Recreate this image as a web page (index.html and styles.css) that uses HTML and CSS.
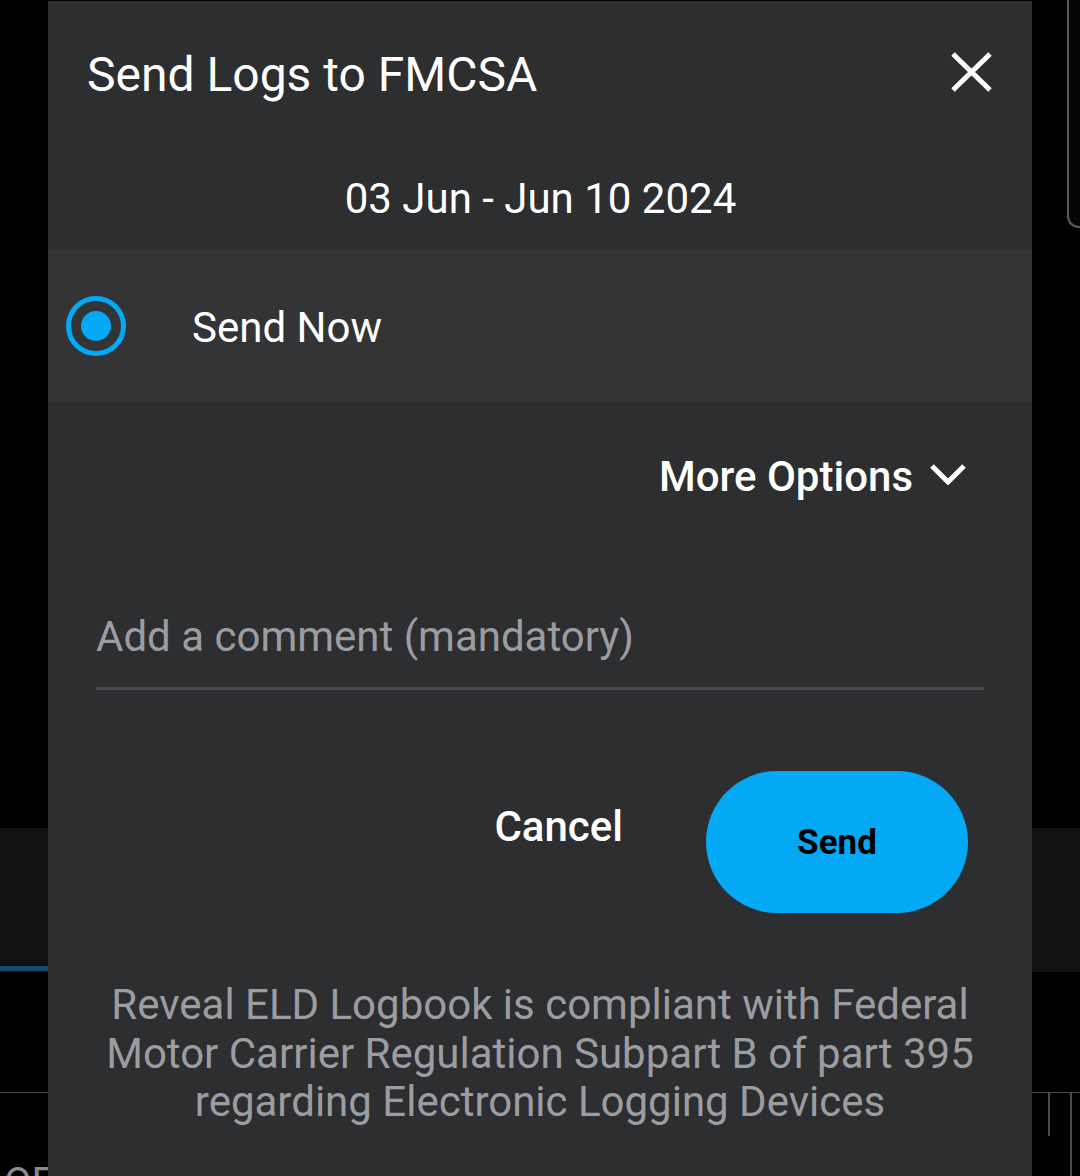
FILE: index.html
```html
<!DOCTYPE html>
<html lang="en">
<head>
<meta charset="utf-8">
<title>Send Logs to FMCSA</title>
<link rel="stylesheet" href="styles.css">
</head>
<body>
<div class="page">
  <div class="topbar"><div class="thumb"></div></div>
  <div class="band"><div class="tab-indicator"></div></div>
  <div class="chart">
    <span class="chart-label">OFF</span>
    <div class="ticks">
      <span class="tick tick-short"></span>
      <span class="tick tick-long"></span>
    </div>
  </div>
</div>

<div class="dialog" role="dialog" aria-label="Send Logs to FMCSA">
  <div class="dialog-top">
    <div class="dialog-header">
      <h1 class="dialog-title">Send Logs to FMCSA</h1>
      <button class="close-btn" aria-label="Close">
        <svg width="41" height="40" viewBox="0 0 41 40"><path d="M2 2 L39 38 M39 2 L2 38" stroke="#ffffff" stroke-width="5" fill="none"/></svg>
      </button>
    </div>
    <div class="date-range">03 Jun - Jun 10 2024</div>
  </div>

  <div class="option-row">
    <span class="radio"><span class="radio-dot"></span></span>
    <span class="option-label">Send Now</span>
  </div>

  <div class="more-options">
    <span>More Options</span>
    <svg width="36" height="22" viewBox="0 0 36 22"><path d="M2 3 L18 19 L34 3" stroke="#ffffff" stroke-width="5" fill="none"/></svg>
  </div>

  <div class="comment-field">
    <span class="placeholder">Add a comment (mandatory)</span>
  </div>

  <div class="actions">
    <button class="btn-cancel">Cancel</button>
    <button class="btn-send">Send</button>
  </div>

  <p class="compliance">Reveal ELD Logbook is compliant with Federal Motor Carrier Regulation Subpart B of part 395 regarding Electronic Logging Devices</p>
</div>
</body>
</html>
```

FILE: styles.css
```css
* { box-sizing: border-box; }

html, body {
  margin: 0;
  padding: 0;
  background: #000000;
  font-family: Roboto, "Noto Sans", "Liberation Sans", sans-serif;
  overflow: hidden;
}

.page {
  position: relative;
  width: 1080px;
  height: 1176px;
  display: flex;
  flex-direction: column;
  overflow: hidden;
}

.page > * { flex-shrink: 0; }

.topbar {
  height: 228px;
  display: flex;
  justify-content: flex-end;
}

.thumb {
  width: 13px;
  height: 228px;
  border: 2px solid #5c5c5e;
  border-top: none;
  border-right: none;
  border-bottom-left-radius: 12px;
  background: #050505;
}

.band {
  margin-top: 600px;
  height: 144px;
  background: #101113;
  display: flex;
  align-items: flex-end;
  padding-bottom: 1px;
}

.tab-indicator {
  width: 300px;
  height: 5px;
  background: #134b6f;
}

.chart {
  margin-top: 120px;
  height: 84px;
  overflow: hidden;
  border-top: 1px solid #4e4e50;
  display: flex;
  justify-content: space-between;
}

.chart-label {
  margin-top: 66px;
  padding-left: 4px;
  font-size: 40px;
  line-height: 48px;
  color: #8a8a8c;
}

.ticks {
  display: flex;
  gap: 20px;
  padding-right: 8px;
}

.tick {
  width: 2px;
  background: #4a4a4c;
}

.tick-short { height: 43px; }
.tick-long { height: 100%; }

/* ---------- Dialog ---------- */

.dialog {
  position: absolute;
  left: 48px;
  top: 1px;
  width: 984px;
  height: 1175px;
  background: #2d2e30;
  display: flex;
  flex-direction: column;
  color: #ffffff;
}

.dialog-top {
  padding: 46px 40px 25px 39px;
}

.dialog-header {
  display: flex;
  justify-content: space-between;
  align-items: flex-start;
}

.dialog-title {
  margin: 0;
  font-size: 48px;
  line-height: 56px;
  font-weight: 400;
}

.close-btn {
  margin-top: 5px;
  padding: 0;
  border: none;
  background: none;
  display: block;
  width: 41px;
  height: 40px;
}

.close-btn svg { display: block; }

.date-range {
  margin-top: 71px;
  font-size: 42px;
  line-height: 50px;
  text-align: center;
  padding-left: 2px;
}

.option-row {
  height: 153px;
  background: #333436;
  display: flex;
  align-items: center;
  padding-left: 18px;
}

.radio {
  width: 60px;
  height: 60px;
  border: 5px solid #03a9f4;
  border-radius: 50%;
  display: flex;
  align-items: center;
  justify-content: center;
  flex-shrink: 0;
}

.radio-dot {
  width: 30px;
  height: 30px;
  border-radius: 50%;
  background: #03a9f4;
}

.option-label {
  margin-left: 66px;
  margin-top: 4px;
  font-size: 42px;
  line-height: 50px;
}

.more-options {
  margin-top: 50px;
  display: flex;
  justify-content: flex-end;
  align-items: center;
  gap: 17px;
  padding-right: 66px;
  font-size: 42px;
  line-height: 50px;
  font-weight: 500;
}

.more-options svg {
  display: block;
  margin-top: -6px;
}

.comment-field {
  margin: 110px 48px 0;
  padding-bottom: 25px;
  border-bottom: 3px solid #48494c;
}

.placeholder {
  display: block;
  font-size: 42px;
  line-height: 50px;
  color: #9c9da1;
}

.actions {
  margin-top: 81px;
  display: flex;
  justify-content: flex-end;
  align-items: flex-start;
  gap: 83px;
  padding-right: 64px;
}

.btn-cancel {
  margin-top: 31px;
  padding: 0;
  border: none;
  background: none;
  color: #ffffff;
  font-family: inherit;
  font-size: 42px;
  line-height: 50px;
  font-weight: 500;
}

.btn-send {
  width: 262px;
  height: 142px;
  border: none;
  border-radius: 71px;
  background: #03a9f4;
  color: #000000;
  font-family: inherit;
  font-size: 35px;
  font-weight: 700;
  padding: 0;
}

.compliance {
  margin: 68px 50px 0;
  font-size: 42px;
  line-height: 48.5px;
  color: #9c9da1;
  text-align: center;
}
```
